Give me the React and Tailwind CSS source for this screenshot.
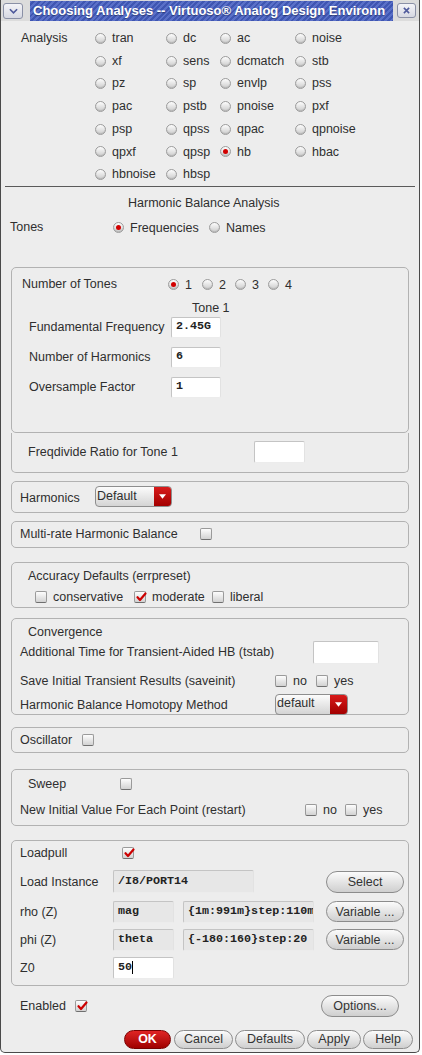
import React from "react";

const Radio = ({ on, label, className = "" }) => (
  <div className={`flex items-center gap-[6px] ${className}`}>
    <span className="flex items-center justify-center w-[11px] h-[11px] shrink-0 rounded-full border border-[#9c9c9c] bg-gradient-to-b from-[#fdfdfd] to-[#cdcdcd] shadow-[inset_0_-1px_1px_rgba(0,0,0,0.12)]">
      {on && <span className="w-[5px] h-[5px] rounded-full bg-[#d20000]" />}
    </span>
    <span>{label}</span>
  </div>
);

const Check = ({ on, label, className = "" }) => (
  <div className={`flex items-center gap-[6px] ${className}`}>
    <span className="relative w-[12px] h-[12px] shrink-0 rounded-[2px] border border-[#9a9a9a] border-b-[#6f6f6f] bg-gradient-to-b from-[#fdfdfd] to-[#d2d2d2]">
      {on && (
        <svg viewBox="0 0 12 12" className="absolute left-[0px] top-[-1px] w-[12px] h-[12px]">
          <path d="M2.5 6.2 L5 9 L10.5 2.5" fill="none" stroke="#cc0000" strokeWidth="2.2" strokeLinecap="round" strokeLinejoin="round" />
        </svg>
      )}
    </span>
    {label && <span>{label}</span>}
  </div>
);

const Field = ({ value = "", w, white, caret }) => (
  <div
    className={`flex items-center h-full pl-[4px] rounded-[2px] border border-[#c4c4c4] border-b-[#ececec] border-r-[#e2e2e2] font-['Liberation_Mono',monospace] font-bold text-[11.7px] text-[#222] overflow-hidden whitespace-nowrap ${
      white ? "bg-white" : "bg-[#e7e7e7]"
    } ${w}`}
  >
    {value}
    {caret && <span className="w-px h-[13px] bg-black" />}
  </div>
);

const Dropdown = ({ label, w }) => (
  <div className={`flex h-[21px] rounded-[4px] border border-[#8e8e8e] overflow-hidden bg-gradient-to-b from-[#fcfcfc] to-[#d4d4d4] ${w}`}>
    <span className="flex-1 pl-[1px] flex items-center pb-[2px]">{label}</span>
    <span className="w-[17px] flex items-center justify-center bg-gradient-to-b from-[#d81a1a] to-[#a30000]">
      <svg viewBox="0 0 8 5" className="w-[7px] h-[5px]">
        <path d="M0 0 L8 0 L4 5 Z" fill="#fff" />
      </svg>
    </span>
  </div>
);

const Btn = ({ label, w, h = "h-[22px]", red }) => (
  <div
    className={`flex items-center justify-center rounded-full border ${h} ${w} ${
      red
        ? "border-[#7a0000] bg-gradient-to-b from-[#e02424] to-[#a00000] text-white font-bold"
        : "border-[#8c8c8c] bg-gradient-to-b from-[#fbfbfb] to-[#cfcfcf] text-[#333]"
    }`}
  >
    {label}
  </div>
);

const Box = ({ className = "", children }) => (
  <div className={`mx-[10px] border border-[#b2b2b2] rounded-[5px] ${className}`}>{children}</div>
);

const analyses = [
  ["tran", "dc", "ac", "noise"],
  ["xf", "sens", "dcmatch", "stb"],
  ["pz", "sp", "envlp", "pss"],
  ["pac", "pstb", "pnoise", "pxf"],
  ["psp", "qpss", "qpac", "qpnoise"],
  ["qpxf", "qpsp", "hb", "hbac"],
  ["hbnoise", "hbsp"],
];

export default function App() {
  return (
    <div className="w-[420px] h-[1053px] flex flex-col border-x border-b border-[#4a4a4a] rounded-b-[5px] bg-[#ededed] overflow-hidden font-['Liberation_Sans',Arial,sans-serif] text-[12.5px] leading-none text-[#2f2f2f]">
      {/* title bar */}
      <div className="flex items-center h-[21px] shrink-0 bg-[#dcdcdc] pl-[2px] pr-[3px]">
        <div className="flex items-center justify-center w-[20px] h-[16px] rounded-[3px] border border-[#8a90a6] bg-gradient-to-b from-[#f4f4f8] to-[#d6d8e2]">
          <svg viewBox="0 0 10 6" className="w-[9px] h-[6px]">
            <path d="M1 1 L5 5 L9 1" fill="none" stroke="#4f5a9c" strokeWidth="1.8" />
          </svg>
        </div>
        <div className="ml-[7px] flex-1 h-[20px] flex items-center pl-[3px] overflow-hidden whitespace-nowrap bg-[repeating-linear-gradient(135deg,#5a70c8_0px,#5a70c8_2px,#3f56b2_2px,#3f56b2_4px)] text-white font-bold text-[13px] [text-shadow:0_1px_1px_rgba(0,0,0,0.35)]">
          Choosing Analyses -- Virtuoso® Analog Design Environn
        </div>
        <div className="ml-[4px] flex items-center justify-center w-[19px] h-[15px] rounded-[3px] border border-[#8a90a6] bg-gradient-to-b from-[#f4f4f8] to-[#d6d8e2]">
          <svg viewBox="0 0 8 8" className="w-[7px] h-[7px]">
            <path d="M1 1 L7 7 M7 1 L1 7" stroke="#4f5a9c" strokeWidth="1.8" />
          </svg>
        </div>
      </div>

      {/* analysis grid */}
      <div className="flex pt-[6px]">
        <div className="w-[94px] pl-[20px] shrink-0">
          <div className="h-[22.7px] flex items-center">Analysis</div>
        </div>
        <div className="grid grid-cols-[71px_54px_75px_1fr]">
          {analyses.map((row) =>
            [0, 1, 2, 3].map((i) =>
              row[i] ? (
                <Radio key={row[i]} on={row[i] === "hb"} label={row[i]} className="h-[22.7px]" />
              ) : (
                <div key={row[0] + i} className="h-[22.7px]" />
              )
            )
          )}
        </div>
      </div>
      <div className="mx-[4px] h-px bg-[#5a5a5a]" />

      <div className="mt-[7px] h-[18px] flex items-center pl-[127px]">Harmonic Balance Analysis</div>
      <div className="mt-[6px] h-[20px] flex items-center pl-[9px]">
        <span className="w-[103px] mb-[1px]">Tones</span>
        <Radio on label="Frequencies" className="w-[96px]" />
        <Radio label="Names" />
      </div>

      {/* tones */}
      <div className="mt-[29px] mx-[10px] h-[166px] border border-[#b2b2b2] rounded-[5px] flex flex-col pl-[10px] pt-[7px]">
        <div className="h-[20px] flex items-center">
          <span className="w-[146px] mb-[1px]">Number of Tones</span>
          <Radio on label="1" className="w-[34px]" />
          <Radio label="2" className="w-[33px]" />
          <Radio label="3" className="w-[33px]" />
          <Radio label="4" />
        </div>
        <div className="mt-[4px] h-[18px] flex items-center pl-[170px]">Tone 1</div>
        {[
          ["Fundamental Frequency", "2.45G", "mt-0"],
          ["Number of Harmonics", "6", "mt-[9px]"],
          ["Oversample Factor", "1", "mt-[9px]"],
        ].map(([l, v, m]) => (
          <div key={l} className={`h-[21px] flex items-center pl-[7px] ${m}`}>
            <span className="w-[142px]">{l}</span>
            <Field value={v} w="w-[50px]" white />
          </div>
        ))}
      </div>
      <div className="mx-[10px] h-[40px] border-x border-b border-[#b2b2b2] rounded-b-[5px] flex items-center pl-[16px]">
        <span className="w-[226px]">Freqdivide Ratio for Tone 1</span>
        <div className="h-[22px]">
          <Field w="w-[51px]" white />
        </div>
      </div>

      <Box className="mt-[8px] h-[32px] flex items-center pl-[8px]">
        <span className="w-[75px] mt-[2px]">Harmonics</span>
        <Dropdown label="Default" w="w-[77px]" />
      </Box>

      <Box className="mt-[8px] h-[27px] flex items-center pl-[8px]">
        <span className="w-[180px]">Multi-rate Harmonic Balance</span>
        <Check />
      </Box>

      <Box className="mt-[14px] h-[46px] pt-[5px]">
        <div className="h-[16px] flex items-center pl-[16px]">Accuracy Defaults (errpreset)</div>
        <div className="mt-[5px] h-[16px] flex items-center pl-[23px]">
          <Check label="conservative" className="w-[99px]" />
          <Check on label="moderate" className="w-[78px]" />
          <Check label="liberal" />
        </div>
      </Box>

      <Box className="mt-[10px] h-[97px] pt-[5px] pl-[8px]">
        <div className="h-[16px] flex items-center pl-[8px]">Convergence</div>
        <div className="mt-[1px] h-[23px] flex items-center">
          <span className="w-[293px]">Additional Time for Transient-Aided HB (tstab)</span>
          <Field w="w-[66px]" white />
        </div>
        <div className="mt-[9px] h-[16px] flex items-center">
          <span className="w-[255px]">Save Initial Transient Results (saveinit)</span>
          <Check label="no" className="w-[41px]" />
          <Check label="yes" />
        </div>
        <div className="mt-[5px] h-[21px] flex items-center">
          <span className="w-[255px] mt-[2px]">Harmonic Balance Homotopy Method</span>
          <Dropdown label="default" w="w-[73px]" />
        </div>
      </Box>

      <Box className="mt-[12px] h-[26px] flex items-center pl-[8px]">
        <span className="w-[62px]">Oscillator</span>
        <Check />
      </Box>

      <Box className="mt-[16px] h-[57px] pt-[6px] pl-[8px]">
        <div className="h-[16px] flex items-center pl-[8px]">
          <span className="w-[92px]">Sweep</span>
          <Check />
        </div>
        <div className="mt-[10px] h-[16px] flex items-center">
          <span className="w-[285px]">New Initial Value For Each Point (restart)</span>
          <Check label="no" className="w-[40px]" />
          <Check label="yes" />
        </div>
      </Box>

      <Box className="mt-[14px] h-[146px] pt-[4px] pl-[8px]">
        <div className="h-[16px] flex items-center">
          <span className="w-[102px]">Loadpull</span>
          <Check on />
        </div>
        <div className="mt-[8px] h-[26px] flex items-center">
          <span className="w-[93px]">Load Instance</span>
          <div className="h-[23px]">
            <Field value="/I8/PORT14" w="w-[141px]" />
          </div>
          <div className="ml-[72px]">
            <Btn label="Select" w="w-[78px]" />
          </div>
        </div>
        {[
          ["rho (Z)", "mag", "{1m:991m}step:110m"],
          ["phi (Z)", "theta", "{-180:160}step:20"],
        ].map(([l, a, b]) => (
          <div key={l} className="mt-[6px] first:mt-[5px] h-[22px] flex items-center">
            <span className="w-[93px]">{l}</span>
            <Field value={a} w="w-[61px]" />
            <div className="ml-[9px] h-full">
              <Field value={b} w="w-[131px]" />
            </div>
            <div className="ml-[12px]">
              <Btn label="Variable ..." w="w-[78px]" h="h-[21px]" />
            </div>
          </div>
        ))}
        <div className="mt-[6px] h-[22px] flex items-center">
          <span className="w-[93px]">Z0</span>
          <Field value="50" w="w-[61px]" white caret />
        </div>
      </Box>

      <div className="mt-[10px] h-[21px] flex items-center pl-[19px]">
        <span className="w-[55px]">Enabled</span>
        <Check on />
        <div className="ml-[234px]">
          <Btn label="Options..." w="w-[78px]" h="h-[22px]" />
        </div>
      </div>

      <div className="mt-[13px] h-[19px] flex items-center pl-[123px]">
        <Btn label="OK" w="w-[47px]" h="h-[19px]" red />
        <div className="ml-[3px]">
          <Btn label="Cancel" w="w-[59px]" h="h-[19px]" />
        </div>
        <div className="ml-[2px]">
          <Btn label="Defaults" w="w-[70px]" h="h-[19px]" />
        </div>
        <div className="ml-[2px]">
          <Btn label="Apply" w="w-[54px]" h="h-[19px]" />
        </div>
        <div className="ml-[2px]">
          <Btn label="Help" w="w-[50px]" h="h-[19px]" />
        </div>
      </div>
    </div>
  );
}
